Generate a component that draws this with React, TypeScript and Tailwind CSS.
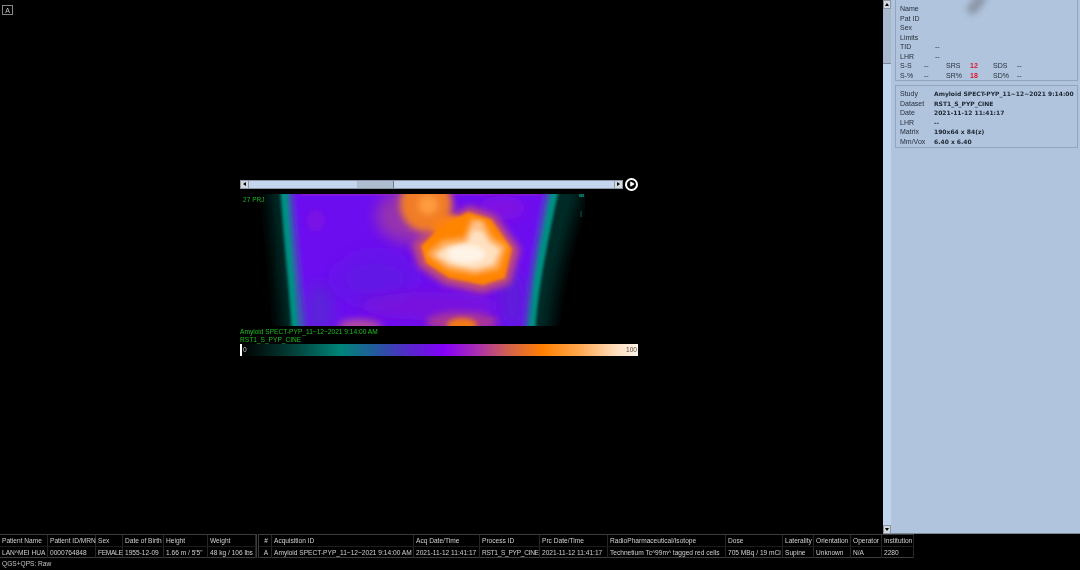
import React from 'react';
import { Play } from 'lucide-react';

const patientCols = [
  { head: 'Patient Name', value: 'LAN^MEI HUA', w: 'w-[48px]' },
  { head: 'Patient ID/MRN', value: '0000764848', w: 'w-[48px]' },
  { head: 'Sex', value: 'FEMALE', w: 'w-[27px]', tight: true },
  { head: 'Date of Birth', value: '1955-12-09', w: 'w-[41px]' },
  { head: 'Height', value: '1.66 m / 5\'5"', w: 'w-[44px]' },
  { head: 'Weight', value: '48 kg / 106 lbs', w: 'w-[48px]' },
];

const studyCols = [
  { head: '#', value: 'A', w: 'w-[13px]', center: true },
  { head: 'Acquisition ID', value: 'Amyloid SPECT-PYP_11~12~2021 9:14:00 AM', w: 'w-[142px]' },
  { head: 'Acq Date/Time', value: '2021-11-12 11:41:17', w: 'w-[66px]' },
  { head: 'Process ID', value: 'RST1_S_PYP_CINE', w: 'w-[60px]', tight: true },
  { head: 'Prc Date/Time', value: '2021-11-12 11:41:17', w: 'w-[68px]' },
  { head: 'RadioPharmaceutical/Isotope', value: 'Technetium Tc^99m^ tagged red cells', w: 'w-[118px]' },
  { head: 'Dose', value: '705 MBq / 19 mCi', w: 'w-[57px]' },
  { head: 'Laterality', value: 'Supine', w: 'w-[31px]' },
  { head: 'Orientation', value: 'Unknown', w: 'w-[37px]' },
  { head: 'Operator', value: 'N/A', w: 'w-[31px]' },
  { head: 'Institution', value: '2280', w: 'w-[32px]' },
];

const summary = [['Name'], ['Pat ID'], ['Sex'], ['Limits'], ['TID', '--'], ['LHR', '--']];
const scores = [
  ['S-S', '--', 'SRS', '12', 'SDS', '--'],
  ['S-%', '--', 'SR%', '18', 'SD%', '--'],
];
const study = [
  ['Study', 'Amyloid SPECT-PYP_11~12~2021 9:14:00'],
  ['Dataset', 'RST1_S_PYP_CINE'],
  ['Date', '2021-11-12 11:41:17'],
  ['LHR', '--'],
  ['Matrix', '190x64 x 84(z)'],
  ['Mm/Vox', '6.40 x 6.40'],
];

const Projection = () => (
  <svg viewBox="0 0 345 132" className="block w-[345px] h-[132px] bg-black">
    <defs>
      <filter id="b0" x="-10%" y="-10%" width="120%" height="120%"><feGaussianBlur stdDeviation="1.7" /></filter>
      <filter id="b1" x="-20%" y="-20%" width="140%" height="140%"><feGaussianBlur stdDeviation="2.6" /></filter>
      <filter id="b2" x="-30%" y="-30%" width="160%" height="160%"><feGaussianBlur stdDeviation="3.8" /></filter>
      <filter id="b3" x="-40%" y="-40%" width="180%" height="180%"><feGaussianBlur stdDeviation="7" /></filter>
      <filter id="b4" x="-40%" y="-40%" width="180%" height="180%"><feGaussianBlur stdDeviation="12" /></filter>
      <clipPath id="frame"><rect width="345" height="132" /></clipPath>
    </defs>
    <g clipPath="url(#frame)">
      {/* teal halo either side of the body */}
      <path d="M28 -10 C33 40 38 90 42 142 L310 142 C314 100 322 60 345 -10 Z" fill="#032a28" filter="url(#b3)" />
      <path d="M40 -10 C43 40 49 90 52 142 L295 142 C297 100 307 50 320 -10 Z" fill="#049084" filter="url(#b0)" />
      {/* body */}
      <path d="M47 -10 C50 40 55 90 59 142 L288 142 C290 100 300 50 313 -10 Z" fill="#3c58b4" filter="url(#b0)" />
      <path d="M52 -10 C56 40 61 90 67 142 L283 142 C286 100 295 50 307 -10 Z" fill="#6c0cf0" filter="url(#b1)" />
      <ellipse cx="80" cy="115" rx="14" ry="26" fill="#4c38c4" fillOpacity="0.5" filter="url(#b3)" />
      <ellipse cx="135" cy="85" rx="40" ry="24" fill="#5a20dc" fillOpacity="0.55" filter="url(#b4)" />
      <ellipse cx="272" cy="105" rx="12" ry="30" fill="#5a24d0" fillOpacity="0.7" filter="url(#b3)" />
      {/* warmer patches */}
      <rect x="60" y="-3" width="240" height="4" fill="#a028b8" fillOpacity="0.8" filter="url(#b1)" />
      <ellipse cx="76" cy="27" rx="9" ry="11" fill="#8a18d8" fillOpacity="0.5" filter="url(#b2)" />
      <ellipse cx="262" cy="14" rx="24" ry="12" fill="#8a12dc" fillOpacity="0.7" filter="url(#b3)" />
      <ellipse cx="120" cy="132" rx="22" ry="7" fill="#b04ca0" filter="url(#b2)" />
      <ellipse cx="190" cy="112" rx="70" ry="14" fill="#8414d0" fillOpacity="0.55" filter="url(#b3)" />
      <ellipse cx="222" cy="128" rx="36" ry="10" fill="#a83498" filter="url(#b2)" />
      {/* heart */}
      <ellipse cx="174" cy="22" rx="38" ry="28" fill="#a03ca0" fillOpacity="0.8" filter="url(#b3)" />
      <path d="M230 12 L256 22 L280 55 L270 90 L242 99 L204 90 L178 72 L172 50 L198 28 Z" fill="#c04c78" filter="url(#b2)" />
      <ellipse cx="186" cy="10" rx="26" ry="28" fill="#f07c28" filter="url(#b2)" />
      <ellipse cx="208" cy="32" rx="17" ry="11" fill="#fa8018" filter="url(#b1)" />
      <path d="M228 18 L251 25 L272 55 L265 84 L243 91 L209 84 L186 69 L181 52 L201 32 Z" fill="#ff8406" filter="url(#b0)" />
      <ellipse cx="188" cy="11" rx="10" ry="10" fill="#ff9c40" filter="url(#b2)" />
      <path d="M186 60 L202 46 L224 43 L231 24 L245 28 L253 43 L267 52 L259 76 L235 81 L207 76 Z" fill="#ffa854" filter="url(#b1)" />
      <path d="M194 61 L206 52 L226 49 L233 33 L243 36 L249 47 L261 55 L254 71 L235 76 L210 71 Z" fill="#ffe0c0" filter="url(#b1)" />
      <ellipse cx="226" cy="60" rx="19" ry="9" fill="#fff4e8" filter="url(#b1)" />
      <ellipse cx="238" cy="32" rx="5" ry="5" fill="#ffc490" filter="url(#b1)" />
      <ellipse cx="222" cy="132" rx="15" ry="8" fill="#f07a18" filter="url(#b1)" />
      {/* right hand noise */}
      <rect x="339" y="0" width="5" height="3" fill="#056a62" />
      <rect x="340" y="17" width="2" height="6" fill="#03302e" />
    </g>
  </svg>
);

const Cell = ({ c, text }: { c: (typeof studyCols)[number]; text: string }) => (
  <div className={`${c.w} shrink-0 border-r border-[#262626] pl-[2px] leading-[12px] whitespace-nowrap ${c.center ? 'text-center' : ''}`}>
    <span className={text === c.value && c.tight ? 'tracking-[-0.3px]' : ''}>{text}</span>
  </div>
);

const TableBlock = ({ cols, className }: { cols: typeof studyCols; className: string }) => (
  <div className={`flex flex-col border border-[#3c3c3c] ${className}`}>
    <div className="flex h-[12px] border-b border-[#1c1c1c]">
      {cols.map((c) => <Cell key={c.head} c={c} text={c.head} />)}
    </div>
    <div className="flex h-[11px]">
      {cols.map((c) => <Cell key={c.head} c={c} text={c.value} />)}
    </div>
  </div>
);

export default function App() {
  return (
    <div className="w-[1080px] h-[570px] bg-black overflow-hidden flex flex-col blur-[0.3px] font-['Liberation_Sans',sans-serif] text-[6.6px] text-[#d8d8d8]">
      <div className="flex h-[534px]">
        {/* viewport */}
        <div className="w-[883px] pl-[2px] pt-[5px]">
          <div className="w-[11px] h-[10px] border border-[#888] flex items-center justify-center text-[7px] leading-none text-[#ccc]">A</div>
          <div className="ml-[238px] mt-[164px] w-[398px]">
            <div className="flex items-center h-[10px]">
              <div className="w-[384px] h-[9px] flex bg-[#c3d6ee] border border-[#8a96a6]">
                <div className="w-[8px] bg-[#d4d8de] border-r border-[#8a96a6] flex items-center justify-center">
                  <span className="border-y-[2px] border-r-[3px] border-y-transparent border-r-black" />
                </div>
                <div className="ml-[108px] w-[37px] bg-[#aebccf] border-r border-[#6f7885]" />
                <div className="flex-1" />
                <div className="w-[8px] bg-[#d4d8de] border-l border-[#8a96a6] flex items-center justify-center">
                  <span className="border-y-[2px] border-l-[3px] border-y-transparent border-l-black" />
                </div>
              </div>
              <div className="ml-[2px] w-[13px] h-[13px] shrink-0 rounded-full border-2 border-white flex items-center justify-center">
                <Play className="w-[6px] h-[6px] text-white fill-white ml-[1px]" strokeWidth={1} />
              </div>
            </div>
            <div className="relative mt-[5px]">
              <Projection />
              <span className="absolute left-[3px] top-[1px] text-[#1fb31f] text-[6.6px] leading-[10px]">27 PRJ</span>
            </div>
            <div className="mt-[2px] text-[#1fc01f] text-[6.6px] leading-[8px]">
              <div>Amyloid SPECT-PYP_11~12~2021 9:14:00 AM</div>
              <div>RST1_S_PYP_CINE</div>
            </div>
            <div className="h-[12px] flex items-center justify-between pr-[1px] border-l-2 border-white text-[6.6px] bg-[linear-gradient(90deg,#000_0%,#04352f_11%,#008478_25%,#24589e_34%,#5a24d0_43%,#8400fa_51%,#a82cb4_59%,#d06050_67%,#ff8000_76%,#ffa64d_85%,#ffdcb8_94%,#fff4ea_100%)]">
              <span className="ml-[1px] text-[#cfcfcf]">0</span>
              <span className="text-[#5a4a3a]">100</span>
            </div>
          </div>
        </div>

        {/* panel scrollbar */}
        <div className="w-[8px] flex flex-col bg-[#c0d4ee]">
          <div className="h-[9px] bg-[#d2d8e0] border border-[#8a96a6] flex items-center justify-center">
            <span className="border-x-[2px] border-b-[3px] border-x-transparent border-b-black" />
          </div>
          <div className="h-[55px] bg-[#a9b9cd] border-b border-[#7b8798]" />
          <div className="flex-1" />
          <div className="h-[9px] bg-[#d2d8e0] border border-[#8a96a6] flex items-center justify-center">
            <span className="border-x-[2px] border-t-[3px] border-x-transparent border-t-black" />
          </div>
        </div>

        {/* info panel */}
        <div className="relative w-[189px] bg-[#b0c4de] pl-[4px] pr-[2px] text-[#262f3a] text-[7px] border-b border-[#7a8797] overflow-hidden">
          <div className="border-x border-b border-[#93a5bc] h-[81px] pl-[4px] pt-[4px] leading-[9.5px]">
            {summary.map(([k, v]) => (
              <div key={k} className="flex h-[9.5px]">
                <span className="w-[35px]">{k}</span>
                <span>{v}</span>
              </div>
            ))}
            {scores.map((r) => (
              <div key={r[0]} className="flex h-[9.5px]">
                <span className="w-[24px]">{r[0]}</span>
                <span className="w-[22px]">{r[1]}</span>
                <span className="w-[24px]">{r[2]}</span>
                <span className="w-[23px] font-bold text-[#e0142c]">{r[3]}</span>
                <span className="w-[24px]">{r[4]}</span>
                <span>{r[5]}</span>
              </div>
            ))}
          </div>
          <div className="mt-[4px] border border-[#93a5bc] h-[63px] pl-[4px] pt-[3px] leading-[9.5px]">
            {study.map(([k, v]) => (
              <div key={k} className="flex h-[9.5px] whitespace-nowrap">
                <span className="w-[34px] shrink-0">{k}</span>
                <span className="font-bold text-[#1c2530] font-['DejaVu_Sans',sans-serif] text-[6px]">{v}</span>
              </div>
            ))}
          </div>
          <div className="absolute left-[80px] -top-[8px] w-[11px] h-[24px] rotate-[40deg] rounded-full bg-[#8b97a8] blur-[3px]" />
        </div>
      </div>

      {/* dicom info tables */}
      <div className="flex h-[24px] text-[#d0d0d0]">
        <TableBlock cols={patientCols} className="w-[257px] border-l-0" />
        <TableBlock cols={studyCols} className="ml-[1px] w-[656px] border-r-0" />
      </div>
      <div className="h-[12px] pl-[2px] leading-[12px] text-[#c4c4c4]">QGS+QPS: Raw</div>
    </div>
  );
}
